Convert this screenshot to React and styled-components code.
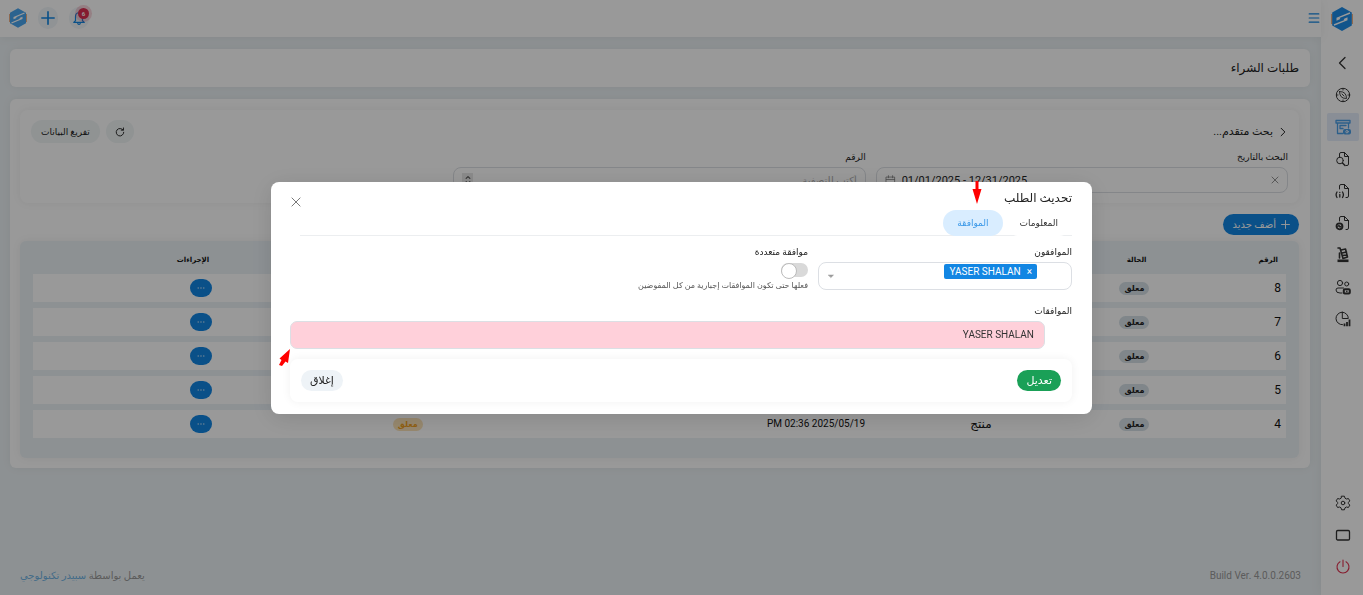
import React, { useState } from 'react'
import styled, { createGlobalStyle } from 'styled-components'

const rows = [
    { id: 8, status: 'معلق' },
    { id: 7, status: 'معلق' },
    { id: 6, status: 'معلق' },
    { id: 5, status: 'معلق' },
    { id: 4, status: 'معلق', type: 'منتج', date: '2025/05/19 02:36 PM', approval: 'معلق' },
]

const Svg = ({ size = 16, children, ...rest }) => (
    <svg width={size} height={size} viewBox="0 0 16 16" fill="none" stroke="currentColor" strokeLinecap="round" strokeLinejoin="round" aria-hidden="true" {...rest}>
        {children}
    </svg>
)

const Logo = ({ width, height, color }) => (
    <svg width={width} height={height} viewBox="0 0 22 24" aria-hidden="true">
        <path d="M.8 7v10M21.2 7v10" stroke="#f3b183" strokeWidth="1.6" />
        <path d="M11 0L20.8 5.5V18.5L11 24L1.2 18.5V5.5Z" fill={color} />
        <path d="M19 6L6.2 11.2V12.6L9 11.4M3 18L15.8 12.8V11.4L13 12.6" fill="none" stroke="#fff" strokeWidth="1.4" />
    </svg>
)

const FilePage = () => <path d="M4.5 6V3Q4.5 1.5 6 1.5H9.5L13.5 5.5V13Q13.5 14.5 12 14.5H11M9.5 1.5V5.5H13.5" />

const menu = [
    { name: 'رجوع', icon: <path d="M10 2.5L4.5 8L10 13.5" strokeWidth="1.3" /> },
    { name: 'الرئيسية', icon: <><circle cx="8" cy="8" r="6.7" /><path d="M4.5 4.5Q8.5 4.5 10 6.5T11.5 11.5Q7.5 11.5 6 9.5T4.5 4.5M7 7L9 9M8 1.5V3M8 13V14.5M1.5 8H3M13 8H14.5" strokeWidth=".9" /></> },
    {
        name: 'المشتريات',
        active: true,
        icon: <><path d="M1 1.5H15V4H1ZM2.5 4V14.5H8M13.5 4V9M5 6.5H11M5 6.5V9.5H8" strokeWidth="1.3" /><rect x="8" y="10" width="8" height="5.5" rx="2" fill="currentColor" stroke="none" /><circle cx="12" cy="12.7" r="1.2" stroke="#e4edfb" /></>,
    },
    { name: 'بحث المستندات', icon: <><FilePage /><circle cx="5" cy="9.5" r="3.3" /><path d="M7.5 12L10 14.5" strokeWidth="1.4" /></> },
    { name: 'معلومات المستند', icon: <><FilePage /><path d="M2 9Q.2 11.7 2 14.5M7.5 9Q9.3 11.7 7.5 14.5M4.8 11.5V14M4.8 9.3V9.4" strokeWidth="1.3" /></> },
    { name: 'المستندات المرفوضة', icon: <><FilePage /><circle cx="4.5" cy="11.3" r="3" strokeWidth="1.8" /><path d="M2.7 11.7L4 10.3L5 12.2L6.4 11" strokeWidth="1.2" /></> },
    { name: 'المستودع', icon: <><path d="M3 1H5L8 11.5M6 3L10.5 2L12.5 10L8 11.5M7 6L11.5 5M7.5 8.5L12 8M4.5 6V11" strokeWidth="1.6" /><path d="M2.5 13.8H13.5" strokeWidth="2.6" strokeLinecap="butt" /></> },
    { name: 'الموردون', icon: <><circle cx="5" cy="4" r="2.6" /><circle cx="11.7" cy="5" r="2" /><path d="M8.5 9H3Q1 9 1 11Q1 14 5 14H7" /><rect x="8.8" y="10.2" width="6" height="4.2" rx="1" strokeWidth="2" /><path d="M11.8 12.3V12.4" strokeWidth="1.5" /></> },
    { name: 'التقارير', icon: <><path d="M7 1.2A6.2 6.2 0 1 0 7.5 13.7M7.3 1.2V7.5H13.3A6.2 6.2 0 0 0 7.3 1.2" /><path d="M9.5 12.5V15.3M12 11V15.3M14.5 8.5V15.3" strokeWidth="1.8" strokeLinecap="butt" /></> },
]

function App() {

    const [approvals, setApprovals] = useState(false)

    return (
        <>
            <GlobalStyle />
            <Layout>
                <Sidebar>
                    <Brand><Logo width={22} height={24} color="#1d8ce8" /></Brand>
                    <Nav>
                        {menu.map((item) => (
                            <NavLink key={item.name} href="#" aria-label={item.name} $active={item.active}>
                                <Svg>{item.icon}</Svg>
                            </NavLink>
                        ))}
                    </Nav>
                    <Nav>
                        <NavLink href="#" aria-label="الإعدادات">
                            <Svg>
                                <path d="M6.6 1.2H9.4L10 3.2L11.4 4L13.4 3.5L14.8 5.9L13.4 7.4V8.6L14.8 10.1L13.4 12.5L11.4 12L10 12.8L9.4 14.8H6.6L6 12.8L4.6 12L2.6 12.5L1.2 10.1L2.6 8.6V7.4L1.2 5.9L2.6 3.5L4.6 4L6 3.2Z" />
                                <circle cx="8" cy="8" r="1.8" />
                            </Svg>
                        </NavLink>
                        <NavLink href="#" aria-label="ملء الشاشة">
                            <Svg><rect x="1.5" y="3.5" width="13" height="9.5" rx="1.2" strokeWidth="1.3" /></Svg>
                        </NavLink>
                        <NavLink href="#" aria-label="خروج" $danger>
                            <Svg><path d="M5 2.8A6 6 0 1 0 11 2.8M8 1V7.5" strokeWidth="1.1" /></Svg>
                        </NavLink>
                    </Nav>
                </Sidebar>

                <Main>
                    <TopBar>
                        <IconButton aria-label="القائمة">
                            <Svg size={12}><path d="M1.5 2.5H14.5M1.5 8H14.5M1.5 13.5H14.5" strokeWidth="1.4" /></Svg>
                        </IconButton>
                        <TopActions>
                            <RoundButton aria-label="الإشعارات">
                                <Svg size={14}><path d="M8 2Q4 2 4 6.5V11L2 13H14L12 11V6.5Q12 2 8 2M6.5 14.5Q8 16 9.5 14.5" strokeWidth="1.4" /></Svg>
                                <Counter>6</Counter>
                            </RoundButton>
                            <RoundButton aria-label="إضافة">
                                <Svg size={14}><path d="M8 1V15M1 8H15" strokeWidth="1.9" /></Svg>
                            </RoundButton>
                            <Logo width={18} height={20} color="#4aa5ee" />
                        </TopActions>
                    </TopBar>

                    <Content>
                        <TitleCard><PageTitle>طلبات الشراء</PageTitle></TitleCard>
                        <PageCard>
                            <SearchPanel>
                                <SearchHead>
                                    <SearchToggle>
                                        <Svg size={10}><path d="M5 2L11 8L5 14" strokeWidth="1.6" /></Svg>
                                        بحث متقدم...
                                    </SearchToggle>
                                    <Group>
                                        <Pill $icon aria-label="تحديث">
                                            <Svg size={10}><path d="M13 5A6 6 0 1 0 14 8.5M13.5 1.5V5H10" strokeWidth="1.5" /></Svg>
                                        </Pill>
                                        <Pill>تفريغ البيانات</Pill>
                                    </Group>
                                </SearchHead>
                                <Columns>
                                    <Field>
                                        <Label htmlFor="date">البحث بالتاريخ</Label>
                                        <InputBox dir="ltr">
                                            <Svg size={11}><path d="M2 3H14V14.5H2ZM2 6.5H14M5 1V4M11 1V4" strokeWidth="1.1" /></Svg>
                                            <Input id="date" $size={11} defaultValue="01/01/2025 - 12/31/2025" />
                                            <ClearButton aria-label="مسح">
                                                <Svg size={8}><path d="M2 2L14 14M14 2L2 14" strokeWidth="1.6" /></Svg>
                                            </ClearButton>
                                        </InputBox>
                                    </Field>
                                    <Field>
                                        <Label htmlFor="number">الرقم</Label>
                                        <InputBox>
                                            <Input id="number" $size={10} placeholder="أكتب للتصفية" />
                                            <Stepper aria-label="تغيير الرقم"><Svg size={10}><path d="M5 5.5L8 2.5L11 5.5M5 10.5L8 13.5L11 10.5" strokeWidth="1.8" /></Svg></Stepper>
                                        </InputBox>
                                    </Field>
                                </Columns>
                            </SearchPanel>

                            <AddButton>
                                <Svg size={9}><path d="M8 1V15M1 8H15" strokeWidth="1.7" /></Svg>
                                أضف جديد
                            </AddButton>

                            <TablePanel>
                                <Table>
                                    <colgroup>
                                        <Col $w={10.5} />
                                        <Col $w={12.6} />
                                        <Col $w={10.1} />
                                        <Col $w={35.3} />
                                        <Col $w={16.8} />
                                        <Col $w={14.7} />
                                    </colgroup>
                                    <thead>
                                        <tr>
                                            <Th>الرقم</Th>
                                            <Th>الحالة</Th>
                                            <Th />
                                            <Th />
                                            <Th />
                                            <Th>الإجراءات</Th>
                                        </tr>
                                    </thead>
                                    <tbody>
                                        {rows.map((row) => (
                                            <tr key={row.id}>
                                                <Td>{row.id}</Td>
                                                <Td><Badge>{row.status}</Badge></Td>
                                                <Td>{row.type}</Td>
                                                <DateCell>{row.date}</DateCell>
                                                <Td>{row.approval && <Badge $warning>{row.approval}</Badge>}</Td>
                                                <Td>
                                                    <MoreButton aria-label="خيارات">
                                                        <Svg size={8}><path d="M2 8H3M7.5 8H8.5M13 8H14" strokeWidth="1.8" /></Svg>
                                                    </MoreButton>
                                                </Td>
                                            </tr>
                                        ))}
                                    </tbody>
                                </Table>
                            </TablePanel>
                        </PageCard>
                    </Content>

                    <Footer>
                        <span dir="ltr">Build Ver. 4.0.0.2603</span>
                        <span>يعمل بواسطة <a href="#">سبيدر تكنولوجي</a></span>
                    </Footer>
                </Main>
            </Layout>

            <Overlay>
                <Modal role="dialog" aria-labelledby="modal-title">
                    <ModalTitle id="modal-title">تحديث الطلب</ModalTitle>
                    <CloseIcon aria-label="إغلاق النافذة">
                        <Svg size={10}><path d="M1.5 1.5L14.5 14.5M14.5 1.5L1.5 14.5" strokeWidth="1.4" /></Svg>
                    </CloseIcon>
                    <Tabs role="tablist">
                        <Tab role="tab">المعلومات</Tab>
                        <Tab role="tab" aria-selected="true" $active>الموافقة</Tab>
                    </Tabs>
                    <ModalColumns>
                        <Field>
                            <Label htmlFor="approvers">الموافقون</Label>
                            <InputBox $tall>
                                <MultiInput id="approvers" />
                                <Tag><span aria-hidden="true">×</span>YASER SHALAN</Tag>
                                <Caret aria-label="فتح القائمة"><Svg size={8}><path d="M3 6H13L8 11Z" fill="currentColor" /></Svg></Caret>
                            </InputBox>
                        </Field>
                        <Field>
                            <Label htmlFor="multi">موافقة متعددة</Label>
                            <Switch id="multi" type="checkbox" checked={approvals} onChange={(e) => setApprovals(e.target.checked)} />
                            <Hint>فعلها حتى تكون الموافقات إجبارية من كل المفوضين</Hint>
                        </Field>
                    </ModalColumns>
                    <ApprovalField>
                        <Label htmlFor="approval">الموافقات</Label>
                        <ApprovalInput id="approval" readOnly value="YASER SHALAN" />
                    </ApprovalField>
                    <ModalFooter>
                        <FormButton $primary>تعديل</FormButton>
                        <FormButton>إغلاق</FormButton>
                    </ModalFooter>
                    <TabArrow width="10" height="23" viewBox="0 0 10 23" aria-hidden="true">
                        <path d="M3.5 0H6.5V8H9.5L5 23L.5 8H3.5Z" fill="#f00" />
                    </TabArrow>
                    <FieldArrow width="11" height="17" viewBox="0 0 11 17" aria-hidden="true">
                        <path d="M11 0L9 14L6.5 12.5L3 17L0 16L2.5 11L.5 9.5Z" fill="#f00" />
                    </FieldArrow>
                </Modal>
            </Overlay>
        </>
    )
}

const GlobalStyle = createGlobalStyle`
    * {
        box-sizing: border-box;
    }
    body {
        margin: 0;
        direction: rtl;
        background: #ecf2f5;
        color: #222;
        font-family: Roboto, "DejaVu Sans", sans-serif;
        font-size: 10px;
    }
    button, input {
        font-family: inherit;
        margin: 0;
    }
    button {
        border: none;
        padding: 0;
        background: none;
        color: inherit;
        cursor: pointer;
        display: inline-flex;
        align-items: center;
        justify-content: center;
        white-space: nowrap;
    }
    svg {
        flex: none;
    }
`

const Layout = styled.div`
    display: flex;
    min-height: 100vh;
`

const Sidebar = styled.aside`
    width: 42px;
    flex: none;
    display: flex;
    flex-direction: column;
    align-items: center;
    padding-bottom: 14px;
    background: #fff;
    box-shadow: 0 0 12px rgba(0, 0, 0, 0.06);
`

const Brand = styled.div`
    height: 49px;
    padding-top: 7px;
`

const Nav = styled.nav`
    display: flex;
    flex-direction: column;
    gap: 4px;
    padding-left: 2px;
    &:last-child {
        margin-top: auto;
    }
`

const NavLink = styled.a`
    width: 32px;
    height: 28px;
    display: flex;
    align-items: center;
    justify-content: center;
    border-radius: 2px;
    color: ${(p) => (p.$active ? '#4a9ee6' : p.$danger ? '#e0304e' : '#333')};
    background: ${(p) => (p.$active ? '#e4edfb' : 'none')};
`

const Main = styled.main`
    flex: 1;
    min-width: 0;
    display: flex;
    flex-direction: column;
`

const TopBar = styled.header`
    height: 37px;
    display: flex;
    align-items: center;
    justify-content: space-between;
    padding: 0 1px 1px 9px;
    background: #fff;
    box-shadow: 0 1px 10px rgba(0, 0, 0, 0.06);
`

const IconButton = styled.button`
    color: #1286e3;
`

const TopActions = styled.div`
    display: flex;
    align-items: center;
    gap: 11px;
`

const RoundButton = styled.button`
    position: relative;
    width: 20px;
    height: 22px;
    border-radius: 10px;
    background: #f0f5f9;
    color: #1286e3;
`

// Sits over the corner of the bell button
const Counter = styled.span`
    position: absolute;
    top: 1px;
    right: 0;
    width: 11px;
    height: 11px;
    border-radius: 50%;
    background: #dc2c50;
    box-shadow: 0 0 0 3px rgba(220, 44, 80, 0.2);
    color: #fff;
    font-size: 6px;
    font-weight: bold;
    line-height: 11px;
`

const Content = styled.div`
    display: flex;
    flex-direction: column;
    gap: 12px;
    padding: 12px 11px 12px 10px;
`

const Card = styled.section`
    background: #fff;
    border-radius: 6px;
    box-shadow: 0 0 10px rgba(0, 0, 0, 0.06);
`

const TitleCard = styled(Card)`
    padding: 8px 11px;
`

const PageTitle = styled.h1`
    margin: 0;
    font-size: 12px;
    line-height: 22px;
    font-weight: normal;
`

const PageCard = styled(Card)`
    padding: 11px 11px 10px 10px;
`

const SearchPanel = styled(Card)`
    padding: 10px 11px;
    border-radius: 8px;
`

const SearchHead = styled.div`
    display: flex;
    justify-content: space-between;
    align-items: center;
    height: 23px;
`

const SearchToggle = styled.button`
    gap: 5px;
    font-size: 11px;
`

const Group = styled.div`
    display: flex;
    gap: 6px;
`

const Pill = styled.button`
    height: 23px;
    padding: 0 ${(p) => (p.$icon ? '9px' : '10px')};
    border-radius: 12px;
    background: #f0f5f6;
    font-size: 9px;
`

const Columns = styled.div`
    display: grid;
    grid-template-columns: repeat(3, 1fr);
    gap: 10px;
    margin-top: 8px;
`

const Field = styled.div`
    display: flex;
    flex-direction: column;
    align-items: stretch;
`

const Label = styled.label`
    font-size: 9px;
    line-height: 12px;
    margin-bottom: 4px;
`

const InputBox = styled.div`
    display: flex;
    align-items: center;
    gap: 6px;
    height: ${(p) => (p.$tall ? '28px' : '26px')};
    padding: 0 8px;
    border: 1px solid #dcdfe4;
    border-radius: 8px;
    background: #fff;
    color: #777;
`

const Input = styled.input`
    flex: 1;
    min-width: 0;
    padding: 0;
    border: none;
    outline: none;
    background: none;
    color: #222;
    font-size: ${(p) => p.$size}px;
    &::placeholder {
        color: #aaa;
    }
`

const ClearButton = styled.button`
    width: 8px;
    height: 8px;
`

const Stepper = styled.button`
    width: 11px;
    height: 14px;
    background: #e8e8e8;
    color: #555;
`

const AddButton = styled.button`
    gap: 5px;
    height: 21px;
    margin: 11px 0 6px;
    padding: 0 9px;
    border-radius: 11px;
    background: #1286e3;
    color: #fff;
    font-size: 10px;
`

const TablePanel = styled(Card)`
    padding: 5px 13px 14px;
    background: #ebf2f6;
`

const Table = styled.table`
    width: 100%;
    table-layout: fixed;
    border-collapse: separate;
    border-spacing: 0 6px;
`

const Col = styled.col`
    width: ${(p) => p.$w}%;
`

const Th = styled.th`
    height: 16px;
    padding: 0 8px;
    text-align: right;
    font-size: 7px;
    line-height: 15px;
    color: #111;
`

const Td = styled.td`
    height: 28px;
    padding: 0 5px;
    background: #fff;
    font-size: 12px;
    line-height: 16px;
    color: #111;
    white-space: nowrap;
`

const DateCell = styled(Td)`
    font-size: 10px;
`

const Badge = styled.span`
    display: inline-block;
    padding: 0 5px;
    border-radius: 8px;
    background: ${(p) => (p.$warning ? '#fce3b8' : '#d5e0e7')};
    color: ${(p) => (p.$warning ? '#f0a020' : '#222')};
    font-size: 8px;
    font-weight: bold;
    line-height: 13px;
    vertical-align: middle;
`

const MoreButton = styled.button`
    width: 22px;
    height: 18px;
    border-radius: 9px;
    background: #1286e3;
    color: #fff;
    vertical-align: middle;
`

const Footer = styled.footer`
    margin-top: auto;
    display: flex;
    justify-content: space-between;
    padding: 0 20px 12px;
    font-size: 10px;
    line-height: 14px;
    color: #999;
    a {
        color: #6fb2e3;
        text-decoration: none;
    }
`

const Overlay = styled.div`
    position: fixed;
    inset: 0;
    display: flex;
    align-items: center;
    justify-content: center;
    background: rgba(0, 0, 0, 0.4);
`

const Modal = styled.div`
    position: relative;
    width: 100%;
    max-width: 821px;
    padding: 8px 20px 12px 19px;
    border-radius: 8px;
    background: #fff;
    box-shadow: 0 4px 24px rgba(0, 0, 0, 0.12);
`

const ModalTitle = styled.h2`
    margin: 0 0 4px;
    font-size: 12px;
    line-height: 16px;
    font-weight: normal;
`

const CloseIcon = styled.button`
    position: absolute;
    top: 15px;
    left: 20px;
    color: #666;
`

const Tabs = styled.div`
    display: flex;
    gap: 3px;
    margin-left: 10px;
    border-bottom: 1px solid #eceef0;
`

const Tab = styled.button`
    height: 26px;
    padding: 0 14px;
    margin-bottom: -1px;
    border-radius: 13px;
    background: ${(p) => (p.$active ? '#d9edff' : '#fff')};
    color: ${(p) => (p.$active ? '#3a98e8' : '#333')};
    font-size: 9px;
`

const ModalColumns = styled(Columns)`
    margin-top: 10px;
`

const MultiInput = styled(Input)`
    flex: 0 0 20px;
    width: 20px;
`

const Tag = styled.span`
    display: inline-flex;
    align-items: center;
    gap: 6px;
    height: 15px;
    padding: 0 5px 0 6px;
    margin-bottom: 8px;
    border-radius: 2px;
    background: #1286e3;
    color: #fff;
    font-size: 10px;
    white-space: nowrap;
`

const Caret = styled.button`
    margin-right: auto;
    color: #999;
`

const Switch = styled.input`
    appearance: none;
    align-self: flex-start;
    width: 27px;
    height: 14px;
    margin: 1px 0 3px;
    border-radius: 7px;
    background: #d9d9d9;
    &::before {
        content: '';
        display: block;
        width: 14px;
        height: 14px;
        margin-right: auto;
        border: 1px solid #bbb;
        border-radius: 50%;
        background: #fff;
    }
    &:checked {
        background: #1286e3;
    }
    &:checked::before {
        margin-right: 0;
    }
`

const Hint = styled.small`
    font-size: 8px;
    line-height: 12px;
    color: #555;
    white-space: nowrap;
`

const ApprovalField = styled(Field)`
    margin-top: 13px;
`

const ApprovalInput = styled.input`
    height: 28px;
    margin-right: 27px;
    padding: 0 10px;
    border: 1px solid #dcdfe4;
    border-radius: 7px;
    background: #ffd0da;
    color: #333;
    font-size: 10px;
`

const ModalFooter = styled(Card)`
    display: flex;
    justify-content: space-between;
    margin-top: 10px;
    padding: 11px;
    border-radius: 8px;
`

const FormButton = styled.button`
    height: 21px;
    padding: 0 9px;
    border-radius: 11px;
    background: ${(p) => (p.$primary ? '#1aa057' : '#eef3f7')};
    color: ${(p) => (p.$primary ? '#fff' : '#222')};
    font-size: 11px;
`

// Pointers drawn on top of the dialog
const TabArrow = styled.svg`
    position: absolute;
    top: -1px;
    right: 110px;
`

const FieldArrow = styled.svg`
    position: absolute;
    top: 167px;
    left: 8px;
`

export default App
